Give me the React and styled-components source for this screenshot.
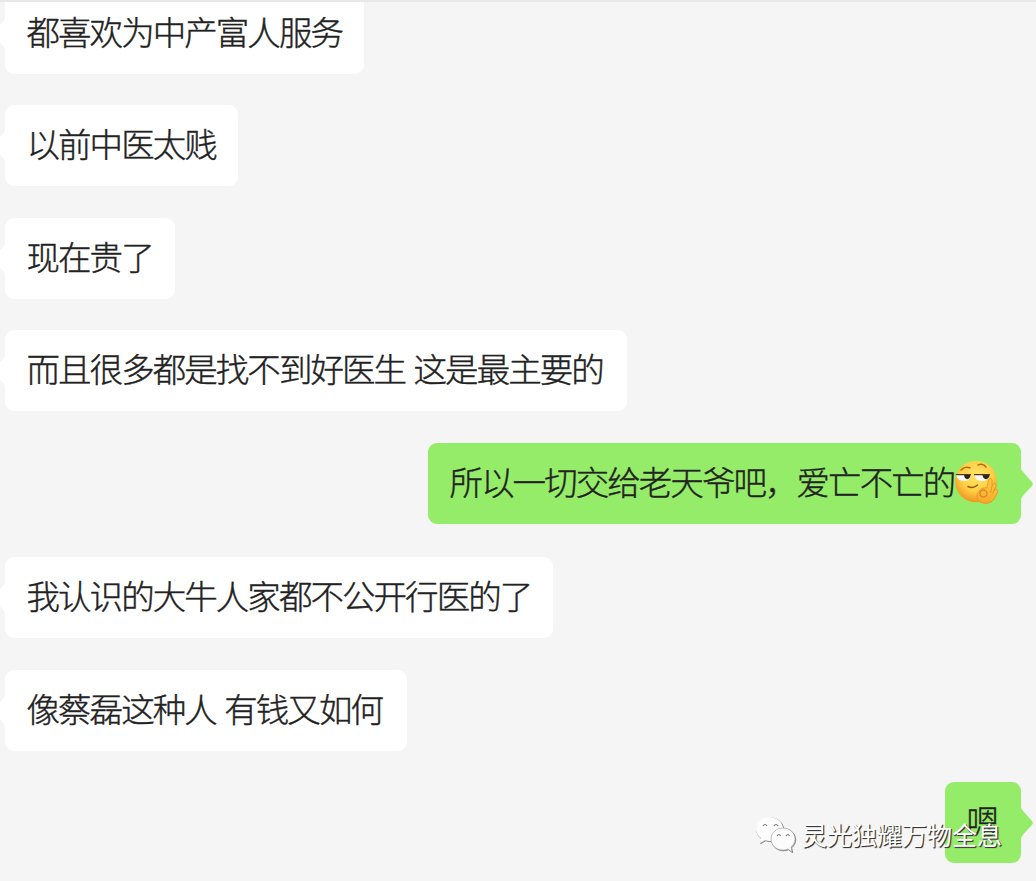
import React from "react";
import styled, { createGlobalStyle } from "styled-components";

const GlobalStyle = createGlobalStyle`
    * {
        box-sizing: border-box;
    }

    body {
        margin: 0;
        background: #f5f5f5;
        font-family: "Noto Sans CJK SC", "Noto Sans", sans-serif;
    }
`

const ChatWindow = styled.main`
    position: relative;
    width: 1036px;
    height: 881px;
    overflow: hidden;
    background: #f5f5f5;
    border-top: 2px solid #e8e8e8;
`

const MessageList = styled.ul`
    display: flex;
    flex-direction: column;
    margin: -9px 0 0;
    padding: 0 15px 0 5px;
    list-style: none;
`

const MessageRow = styled.li`
    display: flex;
    justify-content: ${({ $mine }) => ($mine ? "flex-end" : "flex-start")};
    margin-bottom: ${({ $gap }) => $gap}px;
`

const Bubble = styled.div`
    position: relative;
    display: flex;
    align-items: center;
    width: ${({ $width }) => $width}px;
    height: 81px;
    padding: 0 0 0 21.5px;
    border-radius: 9px;
    background: ${({ $mine }) => ($mine ? "#95ec69" : "#fff")};
`

const BubbleTail = styled.svg`
    position: absolute;
    top: 23px;
    ${({ $mine }) => ($mine ? "right: -12px;" : "left: -12px; transform: scaleX(-1);")}
    width: 13px;
    height: 36px;
    fill: ${({ $mine }) => ($mine ? "#95ec69" : "#fff")};
`

const MessageText = styled.span`
    margin-top: -5px;
    color: #222;
    font-size: 33.5px;
    font-weight: 300;
    line-height: 48px;
    letter-spacing: -1.95px;
    word-spacing: 3px;
    white-space: nowrap;
    -webkit-text-stroke: .4px #222;
`

const EmojiIcon = styled.svg`
    flex: none;
    width: 46px;
    height: 46px;
    margin: -4px 0 0 .5px;
`

const Watermark = styled.div`
    position: absolute;
    left: 755px;
    top: 811px;
    display: flex;
    align-items: center;
    height: 42px;
`

const WatermarkLogo = styled.svg`
    width: 42px;
    height: 38px;
    margin-right: 5px;
`

const WatermarkName = styled.span`
    color: #fff;
    font-size: 25px;
    line-height: 40px;
    white-space: nowrap;
    text-shadow: 1px 1px 1px #333, 1px 1px 0 #666;
`

const Emoji = () => (
    <EmojiIcon viewBox="0 0 46 46">
        <defs>
            <radialGradient id="face" cx="52%" cy="36%" r="62%">
                <stop offset="0" stopColor="#ffe566" />
                <stop offset=".6" stopColor="#ffd044" />
                <stop offset="1" stopColor="#f09a24" />
            </radialGradient>
            <linearGradient id="hand" x1="0" y1="0" x2="0" y2="1">
                <stop offset="0" stopColor="#ffce48" />
                <stop offset="1" stopColor="#f9a828" />
            </linearGradient>
        </defs>
        <circle cx="21" cy="22.5" r="20.8" fill="url(#face)" />
        <path d="M6 11q4-4 9-2M23 6q5-2 8 2" fill="none" stroke="#b8691c" strokeWidth="1.5" strokeLinecap="round" />
        <path d="M1 16h14.5q0 6-6 6-7 0-8.5-6zM19.500 16h15q-1 6-7.500 6-6.500 0-7.500-6z" fill="#f8f8f8" />
        <path d="M9 16h6.500q-.5 4-3.200 4.200-2.800-.2-3.300-4.200zM27.500 16h7q-.5 4-3.500 4.200-3-.2-3.500-4.200z" fill="#292321" />
        <path d="M.8 15.700h15.200M19 15.700h16" stroke="#55371d" strokeWidth="1.300" />
        <path d="M13 27.500q5 2.500 9.500-1.500" fill="none" stroke="#9c5519" strokeWidth="1.500" strokeLinecap="round" />
        <path d="M32 29l1.500-8q1.500-3.500 3.500 0v6l2.500-3q2 0 1.500 3l-1 3 2 .5q1.500 2 0 4l-3.500 6.500q-6 5.500-13.500 2-5.500-5-1.500-10 3-5 8.500-4z" fill="url(#hand)" stroke="#e89423" strokeWidth=".9" />
        <circle cx="28.5" cy="34.5" r="3.500" fill="#f9b638" stroke="#e08b22" strokeWidth="1.500" />
        <path d="M37 27l-1.500 7M40 29.500l-2.500 5" fill="none" stroke="#e08a1c" strokeWidth=".8" />
    </EmojiIcon>
)

const messages = [
    { text: "都喜欢为中产富人服务", width: 359, gap: 31 },
    { text: "以前中医太贱", width: 233, gap: 32 },
    { text: "现在贵了", width: 170, gap: 31 },
    { text: "而且很多都是找不到好医生 这是最主要的", width: 622, gap: 32 },
    { text: "所以一切交给老天爷吧，爱亡不亡的", width: 593, gap: 33, mine: true, emoji: true },
    { text: "我认识的大牛人家都不公开行医的了", width: 548, gap: 32 },
    { text: "像蔡磊这种人 有钱又如何", width: 402, gap: 31 },
    { text: "嗯", width: 76, gap: 0, mine: true },
]

const Message = ({ text, width, gap, mine, emoji }) => (
    <MessageRow $mine={mine} $gap={gap}>
        <Bubble $mine={mine} $width={width}>
            <BubbleTail $mine={mine} viewBox="0 0 13 36">
                <path d="M0 0Q1 4 4 7L11.500 15.500Q14 18 11.500 20.500L4 28.500Q1 32 0 36Z" />
            </BubbleTail>
            <MessageText>{text}</MessageText>
            {emoji && <Emoji />}
        </Bubble>
    </MessageRow>
)

const App = () => {
    return <>
        <GlobalStyle />
        <ChatWindow>
            <MessageList>
                {messages.map((message) => <Message key={message.text} {...message} />)}
            </MessageList>

            <Watermark>
                <WatermarkLogo viewBox="0 0 42 38">
                    <g fill="#bbb" stroke="#777" strokeWidth=".8" transform="translate(.7 .8)">
                        <path d="M14 2C7 2 1 7 1 14c0 4 2 7 5 9l-1 5 5-3q3 1 6 1c7-1 12-6 12-12C28 7 22 2 14 2z" />
                        <path d="M28 13c-7 0-12 5-12 11s5 11 12 11q3 0 5-1l4 3-1-5c2-2 4-4 4-8 0-6-5-11-12-11z" />
                    </g>
                    <path d="M14 2C7 2 1 7 1 14c0 4 2 7 5 9l-1 5 5-3q3 1 6 1c7-1 12-6 12-12C28 7 22 2 14 2z" fill="#fcfcfc" />
                    <path d="M28 13c-7 0-12 5-12 11s5 11 12 11q3 0 5-1l4 3-1-5c2-2 4-4 4-8 0-6-5-11-12-11z" fill="#fcfcfc" stroke="#888" strokeWidth=".5" />
                    <path d="M8 11q2-3 4 0M19 11q2-3 4 0M22 21q2-3 3.500 0M31 21q2-3 3.500 0" fill="none" stroke="#777" strokeWidth="1.200" />
                </WatermarkLogo>
                <WatermarkName>灵光独耀万物全息</WatermarkName>
            </Watermark>
        </ChatWindow>
    </>;
}

export default App;
